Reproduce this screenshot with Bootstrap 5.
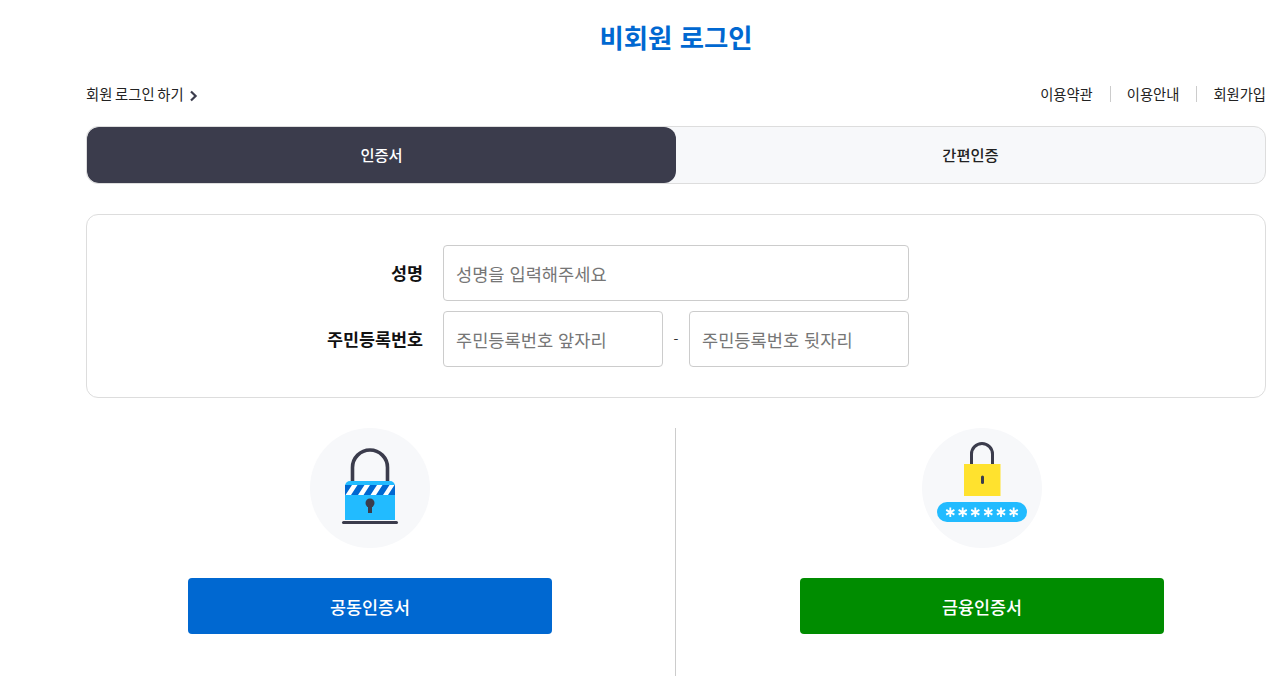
<!DOCTYPE html>
<html lang="ko">
<head>
<meta charset="utf-8">
<title>비회원 로그인</title>
<link href="https://cdn.jsdelivr.net/npm/bootstrap@5.3.0/dist/css/bootstrap.min.css" rel="stylesheet">
<style>
html,body{height:688px;overflow:hidden;background:#fff}
body{font-family:"Noto Sans CJK KR","Noto Sans",sans-serif;color:#222;font-size:14px}
.page-wrap{padding:0 13px 0 86px}
.page-title{font-size:26.4px;font-weight:700;color:#0068d1;line-height:38px;margin:18px 0 0;text-align:center}
.top-links{height:24px;margin-top:26px;line-height:24px;font-size:14.3px;color:#222}
.top-links a{color:#222;text-decoration:none}
.login-link{word-spacing:-1.2px}
.chev{margin-left:5px;margin-top:3px}
.util-sep{width:1px;height:16px;background:#ccc;margin:0 16px 0 17px}
.tab-box{margin-top:20px;height:58px;border:1px solid #ddd;border-radius:12px;background:#f7f8fa;overflow:hidden}
.tab-item{flex:1 1 50%;font-size:15.3px;font-weight:500;color:#222;line-height:54px;text-align:center;border-radius:12px}
.tab-item.on{background:#3b3c4c;color:#fff;flex:0 0 589px}
.form-box{margin-top:30px;height:184px;border:1px solid #ddd;border-radius:12px;padding:30px 0 30px}
.form-line{height:56px;margin-bottom:10px}
.form-line:last-child{margin-bottom:0}
.field-label{width:336px;text-align:right;font-size:17.4px;font-weight:700;color:#111;margin-right:20px;margin-bottom:0}
.text-in{height:56px;border:1px solid #ccc;border-radius:4px;padding:0 12px;font-size:17.6px;color:#222;font-family:inherit;outline:0;box-shadow:none}
.text-in::placeholder{color:#767676;opacity:1}
.w-wide{width:466px}
.w-half{width:220px}
.dash{width:26px;text-align:center;font-size:14px;color:#333}
.cert-row{margin-top:30px;height:248px}
.cert-col{width:589px;padding-right:21px}
.cert-col+.cert-col{border-left:1px solid #ccc;width:591px;padding:0 0 0 22px}
.cert-circle{width:120px;height:120px;border-radius:50%;background:#f7f8fa}
.cert-btn{width:364px;height:56px;margin-top:30px;border:0;border-radius:4px;color:#fff;font-size:17.4px;font-weight:500;padding:2px 0 0}
.cert-blue{background:#0068d1}
.cert-green{background:#008c00}
</style>
</head>
<body>
<main class="page-wrap">
  <h1 class="page-title">비회원 로그인</h1>
  <div class="top-links d-flex justify-content-between align-items-center">
    <a href="#" class="login-link d-flex align-items-center">회원 로그인 하기
      <svg class="chev" width="9" height="12" viewBox="0 0 9 12" aria-hidden="true"><path d="M2 1.500 6.600 6 2 10.500" fill="none" stroke="#3b3c4c" stroke-width="2.200"/></svg>
    </a>
    <div class="d-flex align-items-center">
      <a href="#">이용약관</a><span class="util-sep"></span>
      <a href="#">이용안내</a><span class="util-sep"></span>
      <a href="#">회원가입</a>
    </div>
  </div>
  <div class="tab-box d-flex">
    <div class="tab-item on">인증서</div>
    <div class="tab-item">간편인증</div>
  </div>
  <form class="form-box">
    <div class="form-line d-flex align-items-center">
      <label class="field-label" for="nm">성명</label>
      <input id="nm" class="text-in w-wide" type="text" placeholder="성명을 입력해주세요">
    </div>
    <div class="form-line d-flex align-items-center">
      <label class="field-label" for="rn1">주민등록번호</label>
      <input id="rn1" class="text-in w-half" type="text" placeholder="주민등록번호 앞자리">
      <span class="dash">-</span>
      <input class="text-in w-half" type="text" placeholder="주민등록번호 뒷자리">
    </div>
  </form>
  <div class="cert-row d-flex">
    <div class="cert-col d-flex flex-column align-items-center">
      <div class="cert-circle">
        <svg width="120" height="120" viewBox="0 0 120 120" aria-hidden="true">
          <path d="M42.500 54V39.500a17.500 17.500 0 0 1 35 0V54" fill="none" stroke="#3b3c4c" stroke-width="3.600"/>
          <path d="M35 92V58a5 5 0 0 1 5-5H80a5 5 0 0 1 5 5V92Z" fill="#22bbff"/>
          <rect x="35" y="57" width="50" height="10" fill="#0068d1"/>
          <path d="M35.500 67l6.500-10h5.500l-6.500 10ZM48 67l6.500-10h5.500l-6.500 10ZM60.500 67l6.500-10h5.500l-6.500 10ZM73 67l6.500-10h5l-6.500 10Z" fill="#fff"/>
          <circle cx="60" cy="75" r="4.500" fill="#3b3c4c"/>
          <rect x="58" y="76" width="4" height="9" fill="#3b3c4c"/>
          <rect x="32" y="93" width="56" height="3" rx="1.500" fill="#3b3c4c"/>
        </svg>
      </div>
      <button type="button" class="cert-btn cert-blue">공동인증서</button>
    </div>
    <div class="cert-col d-flex flex-column align-items-center">
      <div class="cert-circle">
        <svg width="120" height="120" viewBox="0 0 120 120" aria-hidden="true">
          <path d="M49.500 37V26a10.500 10.500 0 0 1 21 0V37" fill="none" stroke="#3b3c4c" stroke-width="3"/>
          <rect x="42" y="36" width="36.500" height="32" fill="#ffe22e"/>
          <rect x="59" y="47.500" width="3" height="8.500" rx="1.500" fill="#3b3c4c"/>
          <rect x="15" y="74" width="90" height="20" rx="10" fill="#22bbff"/>
          <g stroke="#fff" stroke-width="1.800">
            <path d="M28.300 79.500v9.500M24.200 81.900l8.200 4.700M32.400 81.900l-8.200 4.700"/>
            <path d="M40.700 79.500v9.500M36.600 81.900l8.200 4.700M44.800 81.900l-8.200 4.700"/>
            <path d="M53.300 79.500v9.500M49.200 81.900l8.200 4.700M57.400 81.900l-8.200 4.700"/>
            <path d="M66.300 79.500v9.500M62.200 81.900l8.200 4.700M70.400 81.900l-8.200 4.700"/>
            <path d="M79 79.500v9.500M74.900 81.900l8.200 4.700M83.100 81.900l-8.200 4.700"/>
            <path d="M91.700 79.500v9.500M87.600 81.900l8.200 4.700M95.800 81.900l-8.200 4.700"/>
          </g>
        </svg>
      </div>
      <button type="button" class="cert-btn cert-green">금융인증서</button>
    </div>
  </div>
</main>
<script src="https://cdn.jsdelivr.net/npm/bootstrap@5.3.0/dist/js/bootstrap.bundle.min.js"></script>
</body>
</html>
